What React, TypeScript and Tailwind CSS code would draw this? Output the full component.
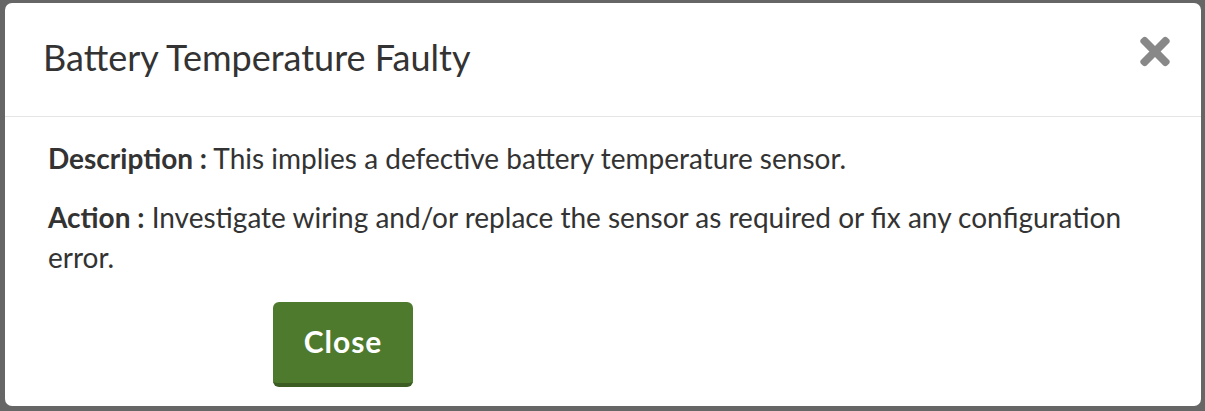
import { FaTimes } from 'react-icons/fa';

export default function App() {
  return (
    <div className="h-[411px] w-full overflow-hidden bg-[#666666] pt-[3px] px-[5px] font-['Lato','Open_Sans',sans-serif] text-[#333333]">
      {/* Modal */}
      <div className="flex h-[403px] w-[1196px] flex-col rounded-[7px] bg-white">
        {/* Header */}
        <div className="flex h-[114px] items-center justify-between border-b border-[#e5e5e5] pl-[38px] pr-[31px]">
          <h2 className="mb-[5px] text-[36px] leading-none">Battery Temperature Faulty</h2>
          <button className="-mt-[17px] text-[#888888]">
            <FaTimes className="h-[43px] w-[30px]" />
          </button>
        </div>

        {/* Body */}
        <div className="flex flex-col px-[43px] pt-[21px] text-[28px] leading-[40px]">
          <p>
            <span className="font-bold">Description :</span> This implies a defective battery temperature sensor.
          </p>
          <p className="mt-[19px]">
            <span className="font-bold">Action :</span> Investigate wiring and/or replace the sensor as required or fix any configuration error.
          </p>
        </div>

        {/* Footer */}
        <div className="pl-[268px] pt-[25px]">
          <button className="h-[85px] w-[140px] rounded-[6px] border-b-[4px] border-[#3b5c22] bg-[#4e7a2e] pb-[2px] text-[30px] font-bold tracking-[1px] text-white">
            Close
          </button>
        </div>
      </div>
    </div>
  );
}
